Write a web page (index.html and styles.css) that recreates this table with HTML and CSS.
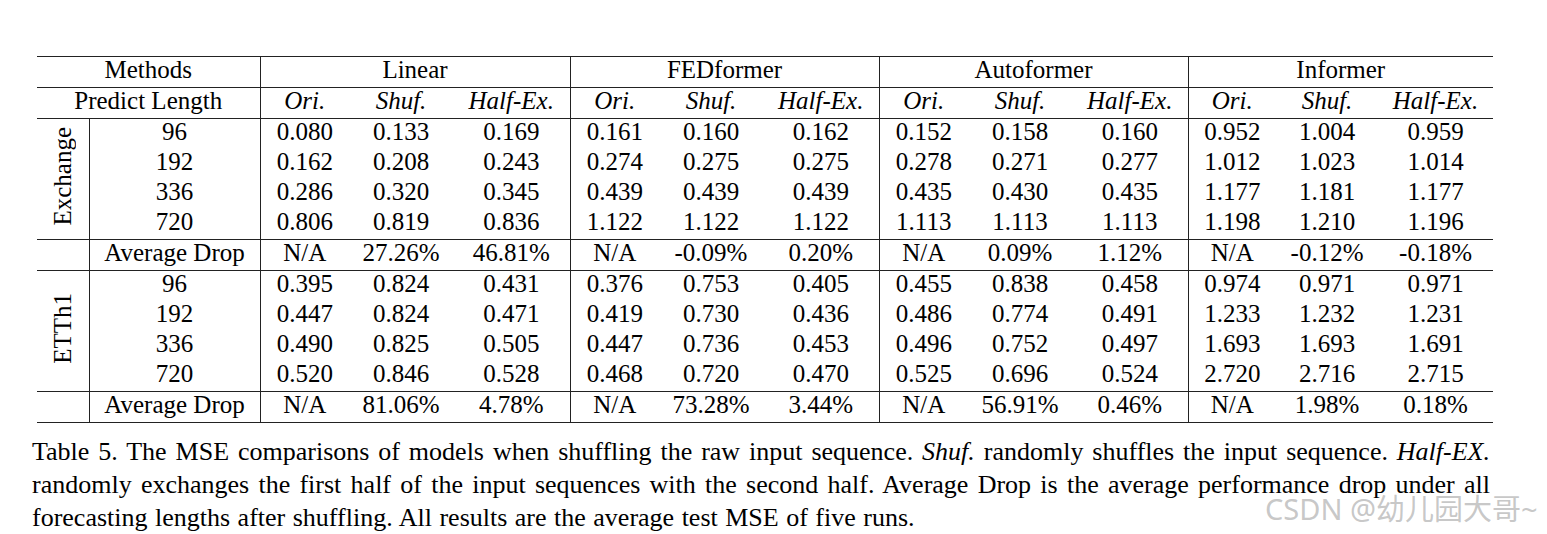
FILE: index.html
```html
<!DOCTYPE html>
<html>
<head>
<meta charset="utf-8">
<link rel="stylesheet" href="styles.css">
</head>
<body>
<div class="page">
<table class="res">
<colgroup>
<col class="c-ds"><col class="c-len">
<col class="c-o"><col class="c-s"><col class="c-h">
<col class="c-o"><col class="c-s"><col class="c-h2">
<col class="c-o"><col class="c-s"><col class="c-h2">
<col class="c-o3"><col class="c-s3"><col class="c-h3">
</colgroup>
<tr class="top">
<td colspan="2">Methods</td>
<td colspan="3" class="vl">Linear</td>
<td colspan="3" class="vl">FEDformer</td>
<td colspan="3" class="vl">Autoformer</td>
<td colspan="3" class="vl">Informer</td>
</tr>
<tr class="hl">
<td colspan="2">Predict Length</td>
<td class="vl it">Ori.</td><td class="it">Shuf.</td><td class="it">Half-Ex.</td>
<td class="vl it">Ori.</td><td class="it">Shuf.</td><td class="it">Half-Ex.</td>
<td class="vl it">Ori.</td><td class="it">Shuf.</td><td class="it">Half-Ex.</td>
<td class="vl it">Ori.</td><td class="it">Shuf.</td><td class="it">Half-Ex.</td>
</tr>
<tr class="hl">
<td rowspan="4" class="ds"><span class="rot">Exchange</span></td>
<td class="vl">96</td>
<td class="vl">0.080</td><td>0.133</td><td>0.169</td>
<td class="vl">0.161</td><td>0.160</td><td>0.162</td>
<td class="vl">0.152</td><td>0.158</td><td>0.160</td>
<td class="vl">0.952</td><td>1.004</td><td>0.959</td>
</tr>
<tr>
<td class="vl">192</td>
<td class="vl">0.162</td><td>0.208</td><td>0.243</td>
<td class="vl">0.274</td><td>0.275</td><td>0.275</td>
<td class="vl">0.278</td><td>0.271</td><td>0.277</td>
<td class="vl">1.012</td><td>1.023</td><td>1.014</td>
</tr>
<tr>
<td class="vl">336</td>
<td class="vl">0.286</td><td>0.320</td><td>0.345</td>
<td class="vl">0.439</td><td>0.439</td><td>0.439</td>
<td class="vl">0.435</td><td>0.430</td><td>0.435</td>
<td class="vl">1.177</td><td>1.181</td><td>1.177</td>
</tr>
<tr>
<td class="vl">720</td>
<td class="vl">0.806</td><td>0.819</td><td>0.836</td>
<td class="vl">1.122</td><td>1.122</td><td>1.122</td>
<td class="vl">1.113</td><td>1.113</td><td>1.113</td>
<td class="vl">1.198</td><td>1.210</td><td>1.196</td>
</tr>
<tr class="hl">
<td></td>
<td class="vl">Average Drop</td>
<td class="vl">N/A</td><td>27.26%</td><td>46.81%</td>
<td class="vl">N/A</td><td>-0.09%</td><td>0.20%</td>
<td class="vl">N/A</td><td>0.09%</td><td>1.12%</td>
<td class="vl">N/A</td><td>-0.12%</td><td>-0.18%</td>
</tr>
<tr class="hl">
<td rowspan="4" class="ds"><span class="rot">ETTh1</span></td>
<td class="vl">96</td>
<td class="vl">0.395</td><td>0.824</td><td>0.431</td>
<td class="vl">0.376</td><td>0.753</td><td>0.405</td>
<td class="vl">0.455</td><td>0.838</td><td>0.458</td>
<td class="vl">0.974</td><td>0.971</td><td>0.971</td>
</tr>
<tr>
<td class="vl">192</td>
<td class="vl">0.447</td><td>0.824</td><td>0.471</td>
<td class="vl">0.419</td><td>0.730</td><td>0.436</td>
<td class="vl">0.486</td><td>0.774</td><td>0.491</td>
<td class="vl">1.233</td><td>1.232</td><td>1.231</td>
</tr>
<tr>
<td class="vl">336</td>
<td class="vl">0.490</td><td>0.825</td><td>0.505</td>
<td class="vl">0.447</td><td>0.736</td><td>0.453</td>
<td class="vl">0.496</td><td>0.752</td><td>0.497</td>
<td class="vl">1.693</td><td>1.693</td><td>1.691</td>
</tr>
<tr>
<td class="vl">720</td>
<td class="vl">0.520</td><td>0.846</td><td>0.528</td>
<td class="vl">0.468</td><td>0.720</td><td>0.470</td>
<td class="vl">0.525</td><td>0.696</td><td>0.524</td>
<td class="vl">2.720</td><td>2.716</td><td>2.715</td>
</tr>
<tr class="hl last">
<td></td>
<td class="vl">Average Drop</td>
<td class="vl">N/A</td><td>81.06%</td><td>4.78%</td>
<td class="vl">N/A</td><td>73.28%</td><td>3.44%</td>
<td class="vl">N/A</td><td>56.91%</td><td>0.46%</td>
<td class="vl">N/A</td><td>1.98%</td><td>0.18%</td>
</tr>
</table>
<div class="caption">
<span class="cl just">Table 5. The MSE comparisons of models when shuffling the raw input sequence. <i>Shuf.</i> randomly shuffles the input sequence. <i>Half-EX.</i></span>
<span class="cl just">randomly exchanges the first half of the input sequences with the second half. Average Drop is the average performance drop under all</span>
<span class="cl">forecasting lengths after shuffling. All results are the average test MSE of five runs.</span>
</div>
<div class="watermark">CSDN @幼儿园大哥~</div>
</div>
</body>
</html>
```
FILE: styles.css
```css
html, body {
  margin: 0;
  padding: 0;
  background: #fff;
}
.page {
  position: relative;
  width: 1547px;
  height: 534px;
  overflow: hidden;
  padding-top: 56px;
  box-sizing: border-box;
  font-family: "Liberation Serif", "Times New Roman", serif;
  color: #000;
}
.res {
  margin-left: 37px;
  border-collapse: collapse;
  table-layout: fixed;
  width: 1456px;
  font-size: 25px;
}
.c-ds { width: 52px; }
.c-len { width: 171px; }
.c-o { width: 89px; }
.c-s { width: 104px; }
.c-h { width: 117px; }
.c-h2 { width: 116px; }
.c-o3 { width: 88px; }
.c-s3 { width: 102px; }
.c-h3 { width: 115px; }
.res td {
  padding: 0 0 4px;
  height: 26px;
  line-height: 26px;
  text-align: center;
  white-space: nowrap;
}
.res tr.top td { border-top: 1.5px solid #222; }
.res tr.hl td { border-top: 1.5px solid #222; }
.res tr.last td { border-bottom: 1.5px solid #222; }
.res td.vl { border-left: 1.5px solid #222; }
.res td.it { font-style: italic; }
.res td.ds {
  vertical-align: middle;
  padding: 0;
}
.rot {
  display: inline-block;
  writing-mode: vertical-rl;
  transform: rotate(180deg);
  line-height: 30px;
}
.caption {
  margin: 12px 0 0 32px;
  width: 1458px;
  font-size: 26px;
  line-height: 33px;
  word-spacing: 1px;
}
.cl {
  display: block;
  white-space: nowrap;
}
.cl.just {
  white-space: normal;
  text-align: justify;
  text-align-last: justify;
}
.watermark {
  position: absolute;
  left: 1265px;
  top: 486px;
  font-family: "Noto Sans", "Noto Sans CJK SC", sans-serif;
  font-size: 29px;
  color: rgba(185, 185, 185, 0.8);
  white-space: nowrap;
}
```
